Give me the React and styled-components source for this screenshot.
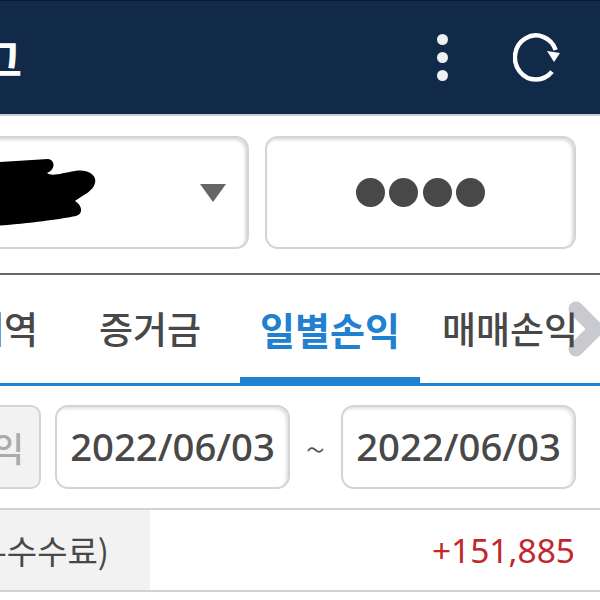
import React from 'react';
import styled, { createGlobalStyle } from 'styled-components';

const Global = createGlobalStyle`
  html, body { margin: 0; padding: 0; background: #fff; }
  body { font-family: "Noto Sans CJK KR", "Noto Sans", sans-serif; }
`;
const Page = styled.div`
  position: relative;
  width: 600px;
  height: 600px;
  overflow: hidden;
  background: #fff;
`;
const Header = styled.header`
  height: 113px;
  background: #122a4a;
  border-top: 1px solid #0a1a33;
  border-bottom: 2px solid #c9ccd3;
  box-sizing: content-box;
  display: flex;
  align-items: center;
  justify-content: space-between;
`;
const Title = styled.h1`
  margin: 0 0 0 -59px;
  font-size: 44px;
  font-weight: 700;
  color: #fff;
  white-space: nowrap;
  line-height: 1;
`;
const Actions = styled.div`
  display: flex;
  align-items: center;
  gap: 65px;
  margin-right: 39px;
`;
const Dots = styled.div`
  display: flex;
  flex-direction: column;
  gap: 7px;
`;
const Dot = styled.span`
  width: 11px;
  height: 11px;
  border-radius: 50%;
  background: #eef0f2;
`;
const AccountRow = styled.div`
  display: flex;
  gap: 16px;
  margin: 20px 24px 0 -100px;
  height: 113px;
`;
const Field = styled.div`
  box-sizing: border-box;
  flex: ${p => p.$flex};
  border: 2px solid #d4d4d4;
  border-radius: 13px;
  box-shadow: inset -2px 2px 3px #dcdcdc;
  background: #fff;
  display: flex;
  align-items: center;
  justify-content: ${p => p.$center ? 'center' : 'space-between'};
`;
const Caret = styled.span`
  width: 0;
  height: 0;
  margin-right: 21px;
  border-left: 13px solid transparent;
  border-right: 13px solid transparent;
  border-top: 18px solid #666;
`;
const Masks = styled.div`
  display: flex;
  gap: 4.5px;
`;
const Mask = styled.span`
  width: 29px;
  height: 29px;
  border-radius: 50%;
  background: #484848;
`;
const Tabs = styled.nav`
  position: relative;
  margin: 24px 0 0 -120px;
  height: 108px;
  display: grid;
  grid-template-columns: repeat(4, 180px);
  border-top: 2px solid #666;
  border-bottom: 3px solid #2280d0;
  box-sizing: content-box;
`;
const Tab = styled.div`
  position: relative;
  z-index: 1;
  display: flex;
  align-items: center;
  justify-content: center;
  font-size: ${p => p.$active ? 38 : 37}px;
  font-weight: ${p => p.$active ? 700 : 500};
  color: ${p => p.$active ? '#2280d0' : '#484848'};
  white-space: nowrap;
  padding-top: 4px;
  border-bottom: 6px solid ${p => p.$active ? '#2280d0' : 'transparent'};
`;
const More = styled.svg`
  position: absolute;
  right: 0;
  top: 26px;
`;
const FilterRow = styled.div`
  display: flex;
  align-items: center;
  height: 84px;
  margin: 19px 0 0 -60px;
`;
const PeriodButton = styled.div`
  box-sizing: border-box;
  width: 101px;
  height: 84px;
  margin-right: 14px;
  border: 2px solid #d4d4d4;
  border-radius: 10px;
  background: #f2f2f2;
  color: #aaa;
  font-size: 34px;
  font-weight: 500;
  display: flex;
  align-items: center;
  justify-content: flex-end;
  padding-right: 15px;
  white-space: nowrap;
`;
const DateField = styled.div`
  box-sizing: border-box;
  width: 235px;
  height: 84px;
  padding-bottom: 3px;
  border: 2px solid #d4d4d4;
  border-radius: 13px;
  box-shadow: inset -2px 2px 3px #e2e2e2;
  font-family: "Noto Sans", sans-serif;
  font-size: 38.3px;
  font-weight: 500;
  color: #484848;
  display: flex;
  align-items: center;
  justify-content: center;
`;
const Tilde = styled.span`
  width: 51px;
  text-align: center;
  font-size: 36px;
  font-weight: 300;
  color: #555;
`;
const ResultRow = styled.div`
  display: flex;
  align-items: stretch;
  height: 80px;
  margin-top: 19px;
  border-top: 2px solid #d2d2d2;
  border-bottom: 2px solid #d2d2d2;
  box-sizing: content-box;
`;
const Label = styled.div`
  width: 150px;
  background: #f2f2f2;
  display: flex;
  align-items: center;
  justify-content: flex-end;
  padding-right: 41px;
  box-sizing: border-box;
  font-size: 33px;
  color: #484848;
  white-space: nowrap;
  overflow: hidden;
`;
const Value = styled.div`
  flex: 1;
  display: flex;
  align-items: center;
  justify-content: flex-end;
  padding-right: 25px;
  font-family: "Noto Sans", sans-serif;
  font-size: 33.5px;
  color: #c0282c;
`;

export default function App() {
  return (
    <>
      <Global />
      <Page>
        <Header>
          <Title>로그</Title>
          <Actions>
            <Dots><Dot /><Dot /><Dot /></Dots>
            <svg width="48" height="50" viewBox="0 0 48 50" fill="none">
              <path d="M39 38.6 A21 22 0 1 1 42.7 17" stroke="#fff" strokeWidth="4.5" />
              <path d="M34 18 L47 20 L41 29 Z" fill="#fff" />
            </svg>
          </Actions>
        </Header>
        <AccountRow>
          <Field $flex="0 0 349px">
            <svg width="196" height="80" viewBox="-98 152 196 80">
              <path d="M-98 165 L0 161 L48 158 C55 159 56 168 47 172 C52 176 62 172 75 170 C88 168 97 174 95 182 C93 190 85 193 75 200 C83 205 83 213 76 215 C50 220 20 224 -98 232 Z" fill="#000" />
            </svg>
            <Caret />
          </Field>
          <Field $flex="1" $center>
            <Masks><Mask /><Mask /><Mask /><Mask /></Masks>
          </Field>
        </AccountRow>
        <Tabs>
          <Tab>거래내역</Tab>
          <Tab>증거금</Tab>
          <Tab $active>일별손익</Tab>
          <Tab>매매손익</Tab>
          <More width="32" height="56" viewBox="0 0 32 56" fill="none">
            <path d="M8 8 L28 28 L8 48" stroke="#c9cacf" strokeWidth="15" strokeLinecap="round" strokeLinejoin="round" />
          </More>
        </Tabs>
        <FilterRow>
          <PeriodButton>손익</PeriodButton>
          <DateField>2022/06/03</DateField>
          <Tilde>~</Tilde>
          <DateField>2022/06/03</DateField>
        </FilterRow>
        <ResultRow>
          <Label>손익(매매손익-수수료)</Label>
          <Value>+151,885</Value>
        </ResultRow>
      </Page>
    </>
  );
}
